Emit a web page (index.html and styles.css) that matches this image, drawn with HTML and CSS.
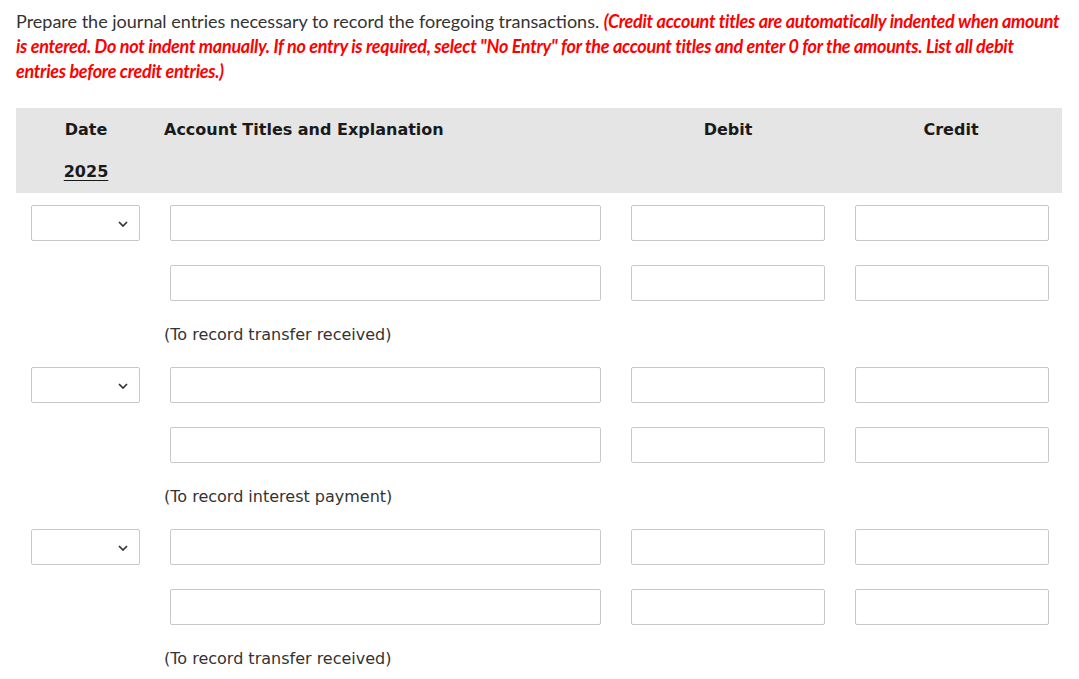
FILE: index.html
```html
<!DOCTYPE html>
<html>
<head>
<meta charset="utf-8">
<link rel="stylesheet" href="styles.css">
</head>
<body>
<div class="page">
  <p class="prompt">Prepare the journal entries necessary to record the foregoing transactions. <em class="note">(Credit account titles are automatically indented when amount is entered. Do not indent manually. If no entry is required, select "No Entry" for the account titles and enter 0 for the amounts. List all debit entries before credit entries.)</em></p>

  <div class="journal">
    <div class="head">
      <div class="row head-row">
        <div class="c-date">Date</div>
        <div class="c-acct">Account Titles and Explanation</div>
        <div class="c-num">Debit</div>
        <div class="c-num">Credit</div>
      </div>
      <div class="row head-row">
        <div class="c-date"><span class="year">2025</span></div>
        <div></div><div></div><div></div>
      </div>
    </div>

    <div class="row entry">
      <div class="c-date"><div class="select"><svg class="chev" width="10" height="6" viewBox="0 0 10 6"><path d="M1 1 L5 5 L9 1" fill="none" stroke="#333" stroke-width="1.7"/></svg></div></div>
      <div class="c-acct in"><div class="box"></div></div>
      <div class="c-num in"><div class="box"></div></div>
      <div class="c-num in cr"><div class="box"></div></div>
    </div>
    <div class="row entry">
      <div class="c-date"></div>
      <div class="c-acct in"><div class="box"></div></div>
      <div class="c-num in"><div class="box"></div></div>
      <div class="c-num in cr"><div class="box"></div></div>
    </div>
    <div class="row expl"><div></div><div class="c-acct">(To record transfer received)</div></div>

    <div class="row entry">
      <div class="c-date"><div class="select"><svg class="chev" width="10" height="6" viewBox="0 0 10 6"><path d="M1 1 L5 5 L9 1" fill="none" stroke="#333" stroke-width="1.7"/></svg></div></div>
      <div class="c-acct in"><div class="box"></div></div>
      <div class="c-num in"><div class="box"></div></div>
      <div class="c-num in cr"><div class="box"></div></div>
    </div>
    <div class="row entry">
      <div class="c-date"></div>
      <div class="c-acct in"><div class="box"></div></div>
      <div class="c-num in"><div class="box"></div></div>
      <div class="c-num in cr"><div class="box"></div></div>
    </div>
    <div class="row expl"><div></div><div class="c-acct">(To record interest payment)</div></div>

    <div class="row entry">
      <div class="c-date"><div class="select"><svg class="chev" width="10" height="6" viewBox="0 0 10 6"><path d="M1 1 L5 5 L9 1" fill="none" stroke="#333" stroke-width="1.7"/></svg></div></div>
      <div class="c-acct in"><div class="box"></div></div>
      <div class="c-num in"><div class="box"></div></div>
      <div class="c-num in cr"><div class="box"></div></div>
    </div>
    <div class="row entry">
      <div class="c-date"></div>
      <div class="c-acct in"><div class="box"></div></div>
      <div class="c-num in"><div class="box"></div></div>
      <div class="c-num in cr"><div class="box"></div></div>
    </div>
    <div class="row expl"><div></div><div class="c-acct">(To record transfer received)</div></div>
  </div>
</div>
</body>
</html>
```

FILE: styles.css
```css
html, body {
  margin: 0;
  padding: 0;
  background: #fff;
}
.page {
  padding: 9px 17px 0 16px;
}
.prompt {
  margin: 0;
  font-family: Lato, "Liberation Sans", sans-serif;
  font-size: 18px;
  line-height: 25px;
  color: #333;
}
.note {
  color: #f00;
  font-weight: bold;
  font-style: italic;
  letter-spacing: -0.29px;
}
.journal {
  margin-top: 24px;
  font-family: "DejaVu Sans", Verdana, sans-serif;
  font-size: 16px;
  color: #222;
}
.head {
  background: #e5e5e5;
}
.row {
  display: grid;
  grid-template-columns: 140px 460px 224px 222px;
}
.head-row {
  height: 42.5px;
  align-items: center;
  font-weight: bold;
  color: #1a1a1a;
}
.c-date {
  display: flex;
  justify-content: center;
}
.head-row .c-acct {
  padding-left: 8px;
}
.c-num {
  text-align: center;
}
.year {
  text-decoration: underline;
  text-underline-offset: 3px;
}
.entry {
  height: 60px;
  align-items: center;
}
.entry .c-date {
  justify-content: flex-start;
  padding-left: 15px;
}
.select {
  width: 107px;
  height: 34px;
  border: 1px solid #c8c8c8;
  border-radius: 2px;
  position: relative;
  background: #fff;
}
.chev {
  position: absolute;
  right: 11px;
  top: 15px;
}
.in {
  padding: 0 15px 0 14px;
}
.c-num.in {
  padding: 0 15px 0 15px;
}
.c-num.in.cr {
  padding: 0 13px 0 15px;
}
.box {
  height: 34px;
  border: 1px solid #c8c8c8;
  border-radius: 2px;
  background: #fff;
}
.expl {
  height: 42px;
  align-items: center;
  color: #333;
}
.expl .c-acct {
  padding-left: 8px;
}
```
